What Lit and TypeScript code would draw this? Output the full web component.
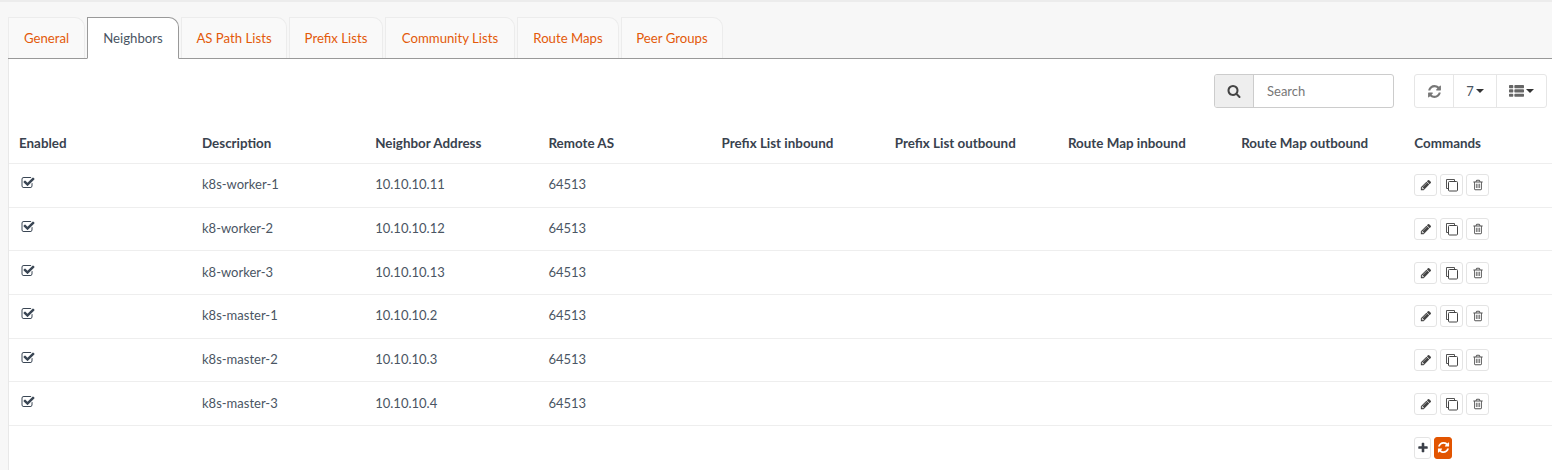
import { LitElement, html, css } from "lit";
import { customElement } from "lit/decorators.js";

const tabs: [string, number][] = [["General", 77], ["Neighbors", 92], ["AS Path Lists", 106], ["Prefix Lists", 94], ["Community Lists", 130], ["Route Maps", 102], ["Peer Groups", 102]];
const cols = ["Enabled", "Description", "Neighbor Address", "Remote AS", "Prefix List inbound", "Prefix List outbound", "Route Map inbound", "Route Map outbound", "Commands"];
const rows = [
  ["k8s-worker-1", "10.10.10.11"],
  ["k8-worker-2", "10.10.10.12"],
  ["k8-worker-3", "10.10.10.13"],
  ["k8s-master-1", "10.10.10.2"],
  ["k8s-master-2", "10.10.10.3"],
  ["k8s-master-3", "10.10.10.4"],
];

const fa = (d: string, size: number, color: string) => html`<svg width=${size} height=${size} viewBox="0 0 1792 1792"><path d=${d} fill=${color}></path></svg>`;
const P = {
  refresh: "M1639 1056q0 5-1 7-64 268-268 434.5t-478 166.5q-146 0-282.5-55t-243.5-157l-129 129q-19 19-45 19t-45-19-19-45v-448q0-26 19-45t45-19h448q26 0 45 19t19 45-19 45l-137 137q71 66 161 102t187 36q134 0 250-65t186-179q11-17 53-117 8-23 30-23h192q13 0 22.5 9.5t9.5 22.5zm25-800v448q0 26-19 45t-45 19h-448q-26 0-45-19t-19-45 19-45l138-138q-148-137-349-137-134 0-250 65t-186 179q-11 17-53 117-8 23-30 23h-199q-13 0-22.5-9.5t-9.5-22.5v-7q65-268 270-434.5t480-166.5q146 0 284 55.5t245 156.5l130-129q19-19 45-19t45 19 19 45z",
  search: "M1216 832q0-185-131.5-316.5t-316.5-131.5-316.5 131.5-131.5 316.5 131.5 316.5 316.5 131.5 316.5-131.5 131.5-316.5zm512 832q0 52-38 90t-90 38q-54 0-90-38l-343-342q-179 124-399 124-143 0-273.5-55.5t-225-150-150-225-55.5-273.5 55.5-273.5 150-225 225-150 273.5-55.5 273.5 55.5 225 150 150 225 55.5 273.5q0 220-124 399l343 343q37 37 37 90z",
  pencil: "M491 1536l91-91-235-235-91 91v107h128v128h107zm523-928q0-22-22-22-10 0-17 7l-542 542q-7 7-7 17 0 22 22 22 10 0 17-7l542-542q7-7 7-17zm-54-192l416 416-832 832h-416v-416zm683 96q0 53-37 90l-166 166-416-416 166-165q36-38 90-38 53 0 91 38l235 234q37 39 37 91z",
  check: "M1472 930v318q0 119-84.5 203.5t-203.5 84.5h-832q-119 0-203.5-84.5t-84.5-203.5v-832q0-119 84.5-203.5t203.5-84.5h832q63 0 117 25 15 7 18 23 3 17-9 29l-49 49q-10 10-23 10-3 0-9-2-23-6-45-6h-832q-66 0-113 47t-47 113v832q0 66 47 113t113 47h832q66 0 113-47t47-113v-254q0-13 9-22l64-64q10-10 23-10 6 0 12 3 20 8 20 29zm231-489l-814 814q-24 24-57 24t-57-24l-430-430q-24-24-24-57t24-57l110-110q24-24 57-24t57 24l263 263 647-647q24-24 57-24t57 24l110 110q24 24 24 57t-24 57z",
  plus: "M1600 736v192q0 40-28 68t-68 28h-416v416q0 40-28 68t-68 28h-192q-40 0-68-28t-28-68v-416h-416q-40 0-68-28t-28-68v-192q0-40 28-68t68-28h416v-416q0-40 28-68t68-28h192q40 0 68 28t28 68v416h416q40 0 68 28t28 68z",
  list: "M512 1248v192q0 40-28 68t-68 28h-320q-40 0-68-28t-28-68v-192q0-40 28-68t68-28h320q40 0 68 28t28 68zm0-512v192q0 40-28 68t-68 28h-320q-40 0-68-28t-28-68v-192q0-40 28-68t68-28h320q40 0 68 28t28 68zm1280 512v192q0 40-28 68t-68 28h-960q-40 0-68-28t-28-68v-192q0-40 28-68t68-28h960q40 0 68 28t28 68zm-1280-1024v192q0 40-28 68t-68 28h-320q-40 0-68-28t-28-68v-192q0-40 28-68t68-28h320q40 0 68 28t28 68zm1280 512v192q0 40-28 68t-68 28h-960q-40 0-68-28t-28-68v-192q0-40 28-68t68-28h960q40 0 68 28t28 68zm0-512v192q0 40-28 68t-68 28h-960q-40 0-68-28t-28-68v-192q0-40 28-68t68-28h960q40 0 68 28t28 68z",
  trash: "M704 736v576q0 14-9 23t-23 9h-64q-14 0-23-9t-9-23v-576q0-14 9-23t23-9h64q14 0 23 9t9 23zm256 0v576q0 14-9 23t-23 9h-64q-14 0-23-9t-9-23v-576q0-14 9-23t23-9h64q14 0 23 9t9 23zm256 0v576q0 14-9 23t-23 9h-64q-14 0-23-9t-9-23v-576q0-14 9-23t23-9h64q14 0 23 9t9 23zm128 724v-948h-896v948q0 22 7 40.5t14.5 27 10.5 8.5h832q3 0 10.5-8.5t14.5-27 7-40.5zm-672-1076h448l-48-117q-7-9-17-11h-317q-10 2-17 11zm928 32v64q0 14-9 23t-23 9h-96v948q0 83-47 143.5t-113 60.5h-832q-66 0-113-58.5t-47-141.5v-952h-96q-14 0-23-9t-9-23v-64q0-14 9-23t23-9h309l70-167q15-37 54-63t79-26h320q40 0 79 26t54 63l70 167h309q14 0 23 9t9 23z",
};
const copy = html`<svg width="14" height="14" viewBox="0 0 14 14"><path d="M3 10.5H1.5V1.5H9.5V3" fill="none" stroke="#555" stroke-width="1"></path><rect x="3.5" y="3.5" width="9" height="9.5" rx="1" fill="none" stroke="#444" stroke-width="1"></rect></svg>`;

@customElement("app-root")
export class AppRoot extends LitElement {
  static styles = css`
    :host { display: block; width: 1552px; height: 470px; overflow: hidden; background: #f7f7f7; font-family: Lato, "Noto Sans", sans-serif; font-size: 13px; color: #4a5563; border-top: 2px solid #ececec; box-sizing: border-box; }
    .tabs { display: flex; gap: 2px; padding: 15px 0 0 0; height: 41px; box-sizing: content-box; border-bottom: 1px solid #999; margin-left: 8px; }
    .tab { height: 41px; box-sizing: border-box; display: flex; align-items: center; justify-content: center; border: 1px solid #ececec; border-bottom: none; border-radius: 0 10px 0 0; color: #e35a0a; background: #f9f9f9; white-space: nowrap; font-size: 13.2px; }
    .tab.active { background: #fff; color: #4a5563; border: 1px solid #999; border-bottom: 1px solid #fff; height: 42px; }
    .body { margin-left: 8px; background: #fff; border-left: 1px solid #e8e8e8; height: 411px; }
    .toolbar { display: flex; justify-content: flex-end; padding: 15px 5px 0 0; gap: 20px; height: 34px; }
    .search { display: flex; width: 180px; height: 34px; border: 1px solid #ccc; border-radius: 3px; box-sizing: border-box; overflow: hidden; }
    .addon { width: 38px; background: #eee; border-right: 1px solid #ccc; display: flex; align-items: center; justify-content: center; }
    .ph { padding-left: 13px; display: flex; align-items: center; color: #777; }
    .group { display: flex; height: 34px; width: 133px; border: 1px solid #e6e6e6; border-radius: 3px; box-sizing: border-box; }
    .group div { display: flex; align-items: center; justify-content: center; gap: 2px; border-right: 1px solid #e6e6e6; }
    .group div:last-child { border-right: none; }
    .refresh { width: 38px; }
    .size { width: 42px; }
    .cols { flex: 1; }
    .caret { width: 0; height: 0; border-left: 4px solid transparent; border-right: 4px solid transparent; border-top: 4px solid #333; }
    .grid { display: grid; grid-template-columns: 183px repeat(7, 173.2px) 1fr; }
    .cell { padding: 0 0 2px 10px; display: flex; align-items: center; border-bottom: 1px solid #eee; height: 43.67px; box-sizing: border-box; white-space: nowrap; }
    .head { font-weight: 700; font-size: 13.4px; color: #39424e; height: 56px; padding: 14px 0 0 10px; box-sizing: border-box; }
    .cell.first { padding-left: 12px; }
    .up { position: relative; top: -1px; display: flex; }
    .cmds { display: flex; gap: 3px; position: relative; top: 1px; }
    .btn { width: 23px; height: 22px; border: 1px solid #e4e4e4; border-radius: 3px; display: flex; align-items: center; justify-content: center; box-sizing: border-box; background: #fff; }
    .foot { display: flex; padding: 11px 0 0 1405px; gap: 3px; }
    .foot .btn { width: 17px; }
    .foot .sync { width: 18px; background: #e25400; border-color: #e25400; }
  `;
  render() {
    return html`
      <div class="tabs">${tabs.map(([t, w]) => html`<div class="tab ${t === "Neighbors" ? "active" : ""}" style="width:${w}px">${t}</div>`)}</div>
      <div class="body">
        <div class="toolbar">
          <div class="search"><div class="addon">${fa(P.search, 14, "#444")}</div><div class="ph">Search</div></div>
          <div class="group"><div class="refresh">${fa(P.refresh, 15, "#777")}</div><div class="size">7<span class="caret"></span></div><div class="cols">${fa(P.list, 15, "#666")}<span class="caret"></span></div></div>
        </div>
        <div class="grid">
          ${cols.map((c) => html`<div class="cell head">${c}</div>`)}
          ${rows.map((r) => html`
            <div class="cell first"><span class="up">${fa(P.check, 14, "#3a4654")}</span></div>
            <div class="cell">${r[0]}</div>
            <div class="cell">${r[1]}</div>
            <div class="cell">64513</div>
            <div class="cell"></div><div class="cell"></div><div class="cell"></div><div class="cell"></div>
            <div class="cell"><div class="cmds"><div class="btn">${fa(P.pencil, 12, "#444")}</div><div class="btn">${copy}</div><div class="btn">${fa(P.trash, 12, "#555")}</div></div></div>
          `)}
        </div>
        <div class="foot"><div class="btn">${fa(P.plus, 12, "#3a3f48")}</div><div class="btn sync">${fa(P.refresh, 13, "#fff")}</div></div>
      </div>
    `;
  }
}
